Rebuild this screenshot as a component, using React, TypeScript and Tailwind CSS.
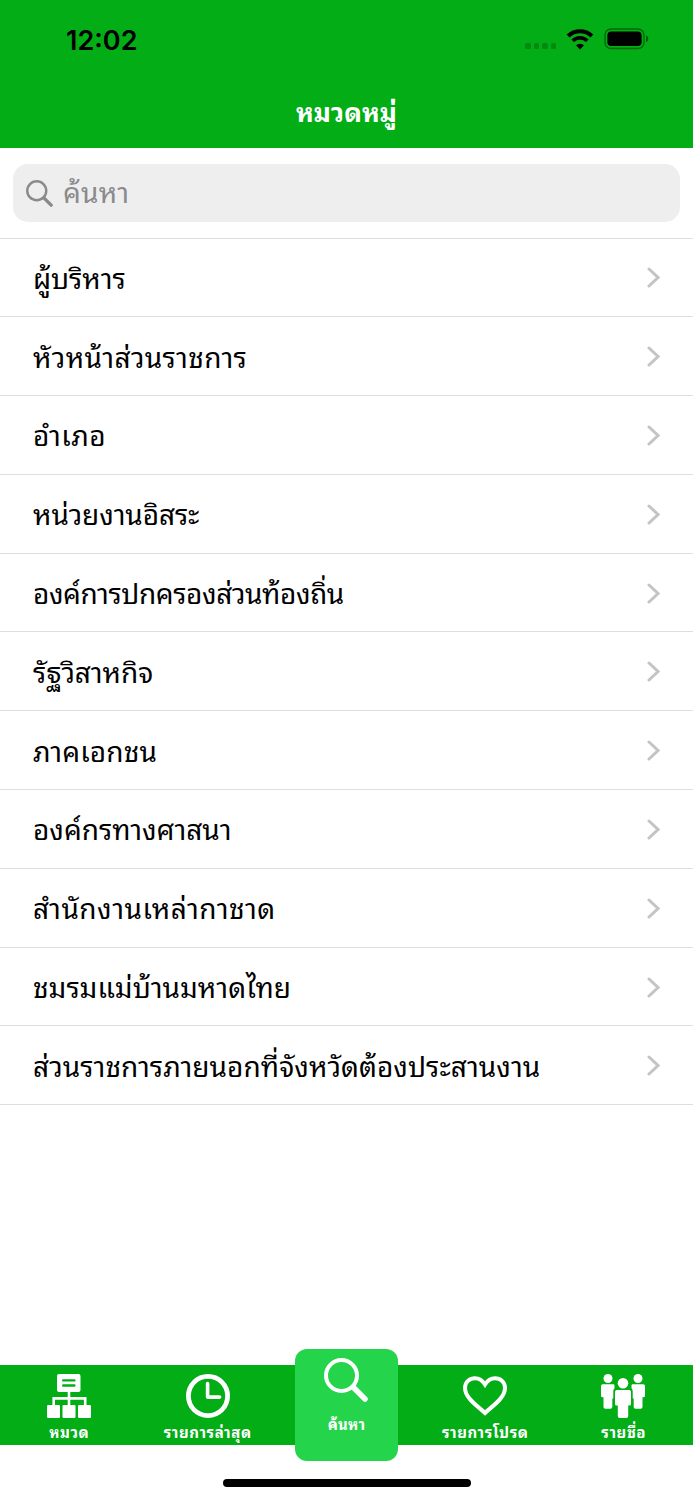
import type { ReactNode } from 'react'
import clsx from 'clsx'

const CATEGORIES = [
  { name: 'ผู้บริหาร', tracking: 'tracking-[-0.05px]' },
  { name: 'หัวหน้าส่วนราชการ', tracking: 'tracking-[0.35px]' },
  { name: 'อำเภอ', tracking: 'tracking-[0.5px]' },
  { name: 'หน่วยงานอิสระ', tracking: 'tracking-[-0.1px]' },
  { name: 'องค์การปกครองส่วนท้องถิ่น', tracking: 'tracking-[-0.38px]' },
  { name: 'รัฐวิสาหกิจ', tracking: 'tracking-[-0.05px]' },
  { name: 'ภาคเอกชน', tracking: 'tracking-[0.15px]' },
  { name: 'องค์กรทางศาสนา', tracking: 'tracking-[0.02px]' },
  { name: 'สำนักงานเหล่ากาชาด', tracking: 'tracking-[0.5px]' },
  { name: 'ชมรมแม่บ้านมหาดไทย', tracking: 'tracking-[0.02px]' },
  { name: 'ส่วนราชการภายนอกที่จังหวัดต้องประสานงาน', tracking: 'tracking-[0.07px]' },
]

function StatusBar() {
  return (
    <div className="flex h-[78px] items-center pl-[66px] pr-11">
      <span className="pt-[2px] font-[Inter] text-[27px] font-semibold leading-none text-black">12:02</span>
      <div className="ml-auto flex items-center">
        <div className="mr-[10px] mt-[14px] flex gap-[3px]">
          {[0, 1, 2, 3].map(i => (
            <span key={i} className="h-[5.5px] w-[5.5px] rounded-[1.5px] bg-black/20" />
          ))}
        </div>
        <svg className="mr-[10px]" width="28" height="22" viewBox="0 0 28 22" fill="none" stroke="#000">
          <path d="M2.1 8a17 17 0 0 1 23.800 0" strokeWidth="4" />
          <path d="M6.700 12.800a10.400 10.400 0 0 1 14.600 0" strokeWidth="3.700" />
          <path d="M14 21.500l-4-4.200a5.800 5.800 0 0 1 8 0z" fill="#000" stroke="none" />
        </svg>
        <svg width="45" height="22" viewBox="0 0 45 22">
          <rect x="1" y="1" width="39" height="19.500" rx="6" fill="none" stroke="#000" strokeOpacity=".4" strokeWidth="1.400" />
          <rect x="3.400" y="3.400" width="34.200" height="14.700" rx="3.800" />
          <path d="M42 7.500c3 1 3 5.500 0 6.500z" fillOpacity=".45" />
        </svg>
      </div>
    </div>
  )
}

function SearchIcon({ className }: { className: string }) {
  return (
    <svg className={className} viewBox="0 0 44 44" fill="none" stroke="currentColor" strokeLinecap="round">
      <circle cx="17.500" cy="17.500" r="15.500" strokeWidth="4" />
      <path d="M29.500 29.500L41 41" strokeWidth="5.500" />
    </svg>
  )
}

function CategoryIcon() {
  return (
    <svg className="h-11 w-11" viewBox="0 0 44 44" fill="currentColor">
      <path fillRule="evenodd" d="M12 0h19.500a2 2 0 0 1 2 2v14a2 2 0 0 1-2 2H12a2 2 0 0 1-2-2V2a2 2 0 0 1 2-2zm4.200 5.200a1.200 1.200 0 0 0 0 2.400h11.200a1.200 1.200 0 0 0 0-2.400zm0 5.100a1.200 1.200 0 0 0 0 2.400h11.200a1.200 1.200 0 0 0 0-2.400z" />
      <path d="M22 17v15M6.700 32v-7.600h31.500V32" fill="none" stroke="currentColor" strokeWidth="2.600" />
      <rect x="0" y="31" width="13" height="13" rx="1.200" />
      <rect x="15.500" y="31" width="13" height="13" rx="1.200" />
      <rect x="31" y="31" width="13" height="13" rx="1.200" />
    </svg>
  )
}

function ClockIcon() {
  return (
    <svg className="h-11 w-11" viewBox="0 0 44 44" fill="none" stroke="currentColor">
      <circle cx="22" cy="22" r="19.600" strokeWidth="4.800" />
      <path d="M21.600 9.500v13.600h12" strokeWidth="3.600" strokeLinecap="round" strokeLinejoin="round" />
    </svg>
  )
}

function HeartIcon() {
  return (
    <svg className="mr-px h-11 w-11" viewBox="0 0 44 44" fill="none" stroke="currentColor" strokeWidth="4">
      <path d="M22 39C16 33 2 24.500 2 14 2 8 6.500 4.200 12 4.200c4.500 0 7.500 2.300 10 6.300 2.500-4 5.500-6.300 10-6.300 5.500 0 10 3.800 10 9.800C42 24.500 28 33 22 39z" />
    </svg>
  )
}

function PeopleIcon() {
  return (
    <svg className="mr-[2px] h-11 w-11" viewBox="0 0 44 44" fill="currentColor">
      <circle cx="7" cy="4.500" r="4.500" />
      <circle cx="37" cy="4.500" r="4.500" />
      <circle cx="22" cy="9.300" r="5.300" />
      <path d="M1.800 10.300h10.500c.8 0 1.200.6 1.200 1.300v2.600c-.8.8-1.200 2-1.200 3.300V24l-1 1v8a1.800 1.800 0 0 1-1.800 1.800H4.300A1.800 1.800 0 0 1 2.500 33V23.300H1.500A1.500 1.500 0 0 1 0 21.800v-9.700a1.800 1.800 0 0 1 1.800-1.800z" />
      <path d="M42.200 10.300H31.700c-.8 0-1.200.6-1.200 1.300v2.600c.8.8 1.200 2 1.200 3.300V24l1 1v8a1.800 1.800 0 0 0 1.800 1.800h5.200a1.800 1.800 0 0 0 1.800-1.800V23.300h1a1.500 1.500 0 0 0 1.500-1.500v-9.700a1.800 1.800 0 0 0-1.800-1.800z" />
      <path d="M16 16h12a2 2 0 0 1 2 2v12a1.600 1.600 0 0 1-1.600 1.600h-1.200V42a2 2 0 0 1-2 2h-6.400a2 2 0 0 1-2-2V31.600h-1.200A1.600 1.600 0 0 1 14 30V18a2 2 0 0 1 2-2z" />
    </svg>
  )
}

function Tab({ label, children }: { label: string; children: ReactNode }) {
  return (
    <div className="flex w-[138.500px] flex-col items-center pt-[9px]">
      {children}
      <span className="mt-[3px] whitespace-nowrap text-[15px] font-bold leading-5 tracking-[0.6px]">{label}</span>
    </div>
  )
}

export default function App() {
  return (
    <div className="flex h-[1500px] w-[693px] flex-col overflow-hidden bg-white font-['Thonburi','Noto_Sans_Thai_Looped','Loma','Noto_Sans_Thai','Noto_Sans','Liberation_Sans',sans-serif]">
      <header className="h-[147.500px] shrink-0 bg-[#02ad15] text-white">
        <StatusBar />
        <h1 className="flex h-[64px] items-center justify-center text-[26px] font-bold tracking-[0.1px]">หมวดหมู่</h1>
      </header>

      <div className="px-[13px] py-4">
        <div className="flex h-[58px] items-center rounded-[15px] bg-[#eee] pl-[13px] text-[#8a8a8d]">
          <SearchIcon className="mt-px h-[27px] w-[27px]" />
          <span className="ml-[10px] pb-[3px] text-[28px] tracking-[0.2px]">ค้นหา</span>
        </div>
      </div>

      <ul className="border-t border-[#dedede]">
        {CATEGORIES.map(c => (
          <li key={c.name} className="flex h-[78.800px] items-center justify-between border-b border-[#dedede] px-[33px]">
            <span className={clsx('whitespace-nowrap pb-px text-[28px] text-black', c.tracking)}>{c.name}</span>
            <svg className="mt-px" width="13" height="21" viewBox="0 0 13 21" fill="none" stroke="#c4c4c6" strokeWidth="3" strokeLinecap="round">
              <path d="M2 2l9 8.500L2 19" />
            </svg>
          </li>
        ))}
      </ul>

      <nav className="mt-auto flex h-20 shrink-0 bg-[#02ad15] text-white">
        <Tab label="หมวด"><CategoryIcon /></Tab>
        <Tab label="รายการล่าสุด"><ClockIcon /></Tab>
        <div className="flex flex-1 justify-center">
          <div className="-mt-4 flex h-28 w-[103.500px] shrink-0 flex-col items-center rounded-xl bg-[#24d54b] pt-[9px]">
            <SearchIcon className="mr-[2px] h-11 w-11" />
            <span className="mt-[11px] text-[15px] font-bold leading-5 tracking-[0.2px]">ค้นหา</span>
          </div>
        </div>
        <Tab label="รายการโปรด"><HeartIcon /></Tab>
        <Tab label="รายชื่อ"><PeopleIcon /></Tab>
      </nav>

      <div className="flex h-[55px] shrink-0 justify-center pt-[33.500px]">
        <div className="h-[8.500px] w-[248px] rounded-full bg-black" />
      </div>
    </div>
  )
}
